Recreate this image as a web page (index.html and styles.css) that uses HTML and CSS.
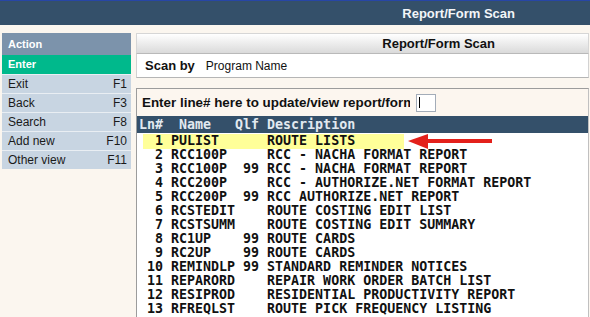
FILE: index.html
```html
<!DOCTYPE html>
<html lang="en">
  <head>
    <meta charset="UTF-8" />
    <meta name="viewport" content="width=device-width, initial-scale=1.0" />
    <title>Report/Form Scan</title>
    <link rel="stylesheet" href="styles.css">
  </head>
  <body>
    <div class="top-line"></div>
    <header class="top-bar">
      <span class="top-title">Report/Form Scan</span>
    </header>

    <div class="main">
      <aside class="actions">
        <div class="actions__head">Action</div>
        <div class="actions__enter">Enter</div>
        <div class="actions__item"><span>Exit</span><span>F1</span></div>
        <div class="actions__item"><span>Back</span><span>F3</span></div>
        <div class="actions__item"><span>Search</span><span>F8</span></div>
        <div class="actions__item"><span>Add new</span><span>F10</span></div>
        <div class="actions__item"><span>Other view</span><span>F11</span></div>
      </aside>

      <section class="content">
        <div class="panel-head">Report/Form Scan</div>
        <div class="scan-row">
          <span class="scan-row__label">Scan by</span>
          <span class="scan-row__value">Program Name</span>
        </div>

        <div class="scan-box">
          <div class="entry-row">
            <span class="entry-row__label">Enter line# here to update/view report/form</span>
            <span class="entry-row__input"><span class="caret"></span></span>
          </div>
          <div class="list-head">Ln#  Name   Qlf Description</div>
          <div class="list">
            <div class="list__row list__row--hl">  1 PULIST      ROUTE LISTS<svg class="arrow" width="86" height="18" viewBox="0 0 86 18"><polygon points="0,8 20,1 20,16" fill="#e3201b"></polygon><rect x="18" y="6" width="66" height="4" fill="#e3201b"></rect></svg></div>
            <div class="list__row">  2 RCC100P     RCC - NACHA FORMAT REPORT</div>
            <div class="list__row">  3 RCC100P  99 RCC - NACHA FORMAT REPORT</div>
            <div class="list__row">  4 RCC200P     RCC - AUTHORIZE.NET FORMAT REPORT</div>
            <div class="list__row">  5 RCC200P  99 RCC AUTHORIZE.NET REPORT</div>
            <div class="list__row">  6 RCSTEDIT    ROUTE COSTING EDIT LIST</div>
            <div class="list__row">  7 RCSTSUMM    ROUTE COSTING EDIT SUMMARY</div>
            <div class="list__row">  8 RC1UP    99 ROUTE CARDS</div>
            <div class="list__row">  9 RC2UP    99 ROUTE CARDS</div>
            <div class="list__row"> 10 REMINDLP 99 STANDARD REMINDER NOTICES</div>
            <div class="list__row"> 11 REPARORD    REPAIR WORK ORDER BATCH LIST</div>
            <div class="list__row"> 12 RESIPROD    RESIDENTIAL PRODUCTIVITY REPORT</div>
            <div class="list__row"> 13 RFREQLST    ROUTE PICK FREQUENCY LISTING</div>
          </div>
        </div>
      </section>
    </div>
  </body>
</html>
```

FILE: styles.css
```css
body {
  margin: 0;
  background-color: #fbf6ef;
  font-family: "Liberation Sans", Arial, sans-serif;
  color: #111;
  overflow: hidden;
}

.top-line {
  height: 1px;
  background-color: #2746a6;
}

.top-bar {
  display: flex;
  justify-content: flex-end;
  align-items: center;
  height: 24px;
  padding-right: 75px;
  background-color: #34506a;
}

.top-title {
  font-size: 13px;
  font-weight: bold;
  color: #f2f5f8;
}

.main {
  display: flex;
  gap: 5px;
  padding: 8px 1px 0 2px;
}

/* left action menu */
.actions {
  width: 129px;
  flex-shrink: 0;
}

.actions__head {
  height: 22px;
  line-height: 22px;
  padding-left: 6px;
  background-color: #7c93ab;
  color: #fff;
  font-size: 11px;
  font-weight: bold;
}

.actions__enter {
  height: 19px;
  line-height: 19px;
  padding-left: 6px;
  background-color: #00b98c;
  color: #fff;
  font-size: 11px;
  font-weight: bold;
}

.actions__item {
  display: flex;
  justify-content: space-between;
  height: 18px;
  line-height: 18px;
  padding: 0 4px 0 6px;
  border-top: 1px solid #e9eef3;
  background-color: #c8d5e2;
  font-size: 12px;
  color: #1a1a1a;
}

/* right panel */
.content {
  width: 453px;
}

.panel-head {
  display: flex;
  justify-content: flex-end;
  align-items: center;
  height: 19px;
  padding-right: 93px;
  border: 1px solid #d6d6d6;
  border-bottom: 1px solid #b9b9b9;
  background: linear-gradient(#ffffff, #dadada);
  font-size: 13px;
  font-weight: bold;
}

.scan-row {
  display: flex;
  align-items: center;
  gap: 11px;
  height: 23px;
  padding-left: 8px;
  border: 1px solid #d2d2d2;
  border-top: none;
  border-bottom-color: #b5b5b5;
  background-color: #fff;
}

.scan-row__label {
  font-size: 13px;
  font-weight: bold;
}

.scan-row__value {
  font-size: 12px;
}

.scan-box {
  margin-top: 10px;
  border: 1px solid #9c9c9c;
  border-right-color: #c0c0c0;
  border-bottom-color: #b0b0b0;
  background-color: #fff;
}

.entry-row {
  display: flex;
  align-items: center;
  gap: 6px;
  height: 27px;
  padding-left: 5px;
  background-color: #fcf6ef;
}

.entry-row__label {
  display: inline-block;
  max-width: 268px;
  overflow: hidden;
  white-space: nowrap;
  font-size: 13.4px;
  font-weight: bold;
}

.entry-row__input {
  display: flex;
  align-items: center;
  width: 16px;
  height: 16px;
  padding-left: 2px;
  border: 1px solid #a3acb8;
  background-color: #fff;
}

.caret {
  width: 1px;
  height: 11px;
  background-color: #000;
}

.list-head,
.list__row {
  padding-left: 2px;
  font-family: "DejaVu Sans Mono", "Liberation Mono", monospace;
  font-size: 13.3px;
  font-weight: bold;
  white-space: pre;
}

.list-head {
  height: 17px;
  line-height: 17px;
  background-color: #34506a;
  color: #e2e9f0;
}

.list {
  padding-bottom: 2px;
}

.list__row {
  position: relative;
  height: 14px;
  line-height: 14px;
  padding-top: 1px;
  margin-bottom: -1px;
  color: #111;
}

.list__row--hl {
  z-index: 0;
}

.list__row--hl::before {
  content: "";
  position: absolute;
  left: 6px;
  top: 1px;
  width: 261px;
  height: 15px;
  background-color: #ffff99;
  z-index: -1;
}

.arrow {
  position: absolute;
  left: 271px;
  top: 0;
}
```
